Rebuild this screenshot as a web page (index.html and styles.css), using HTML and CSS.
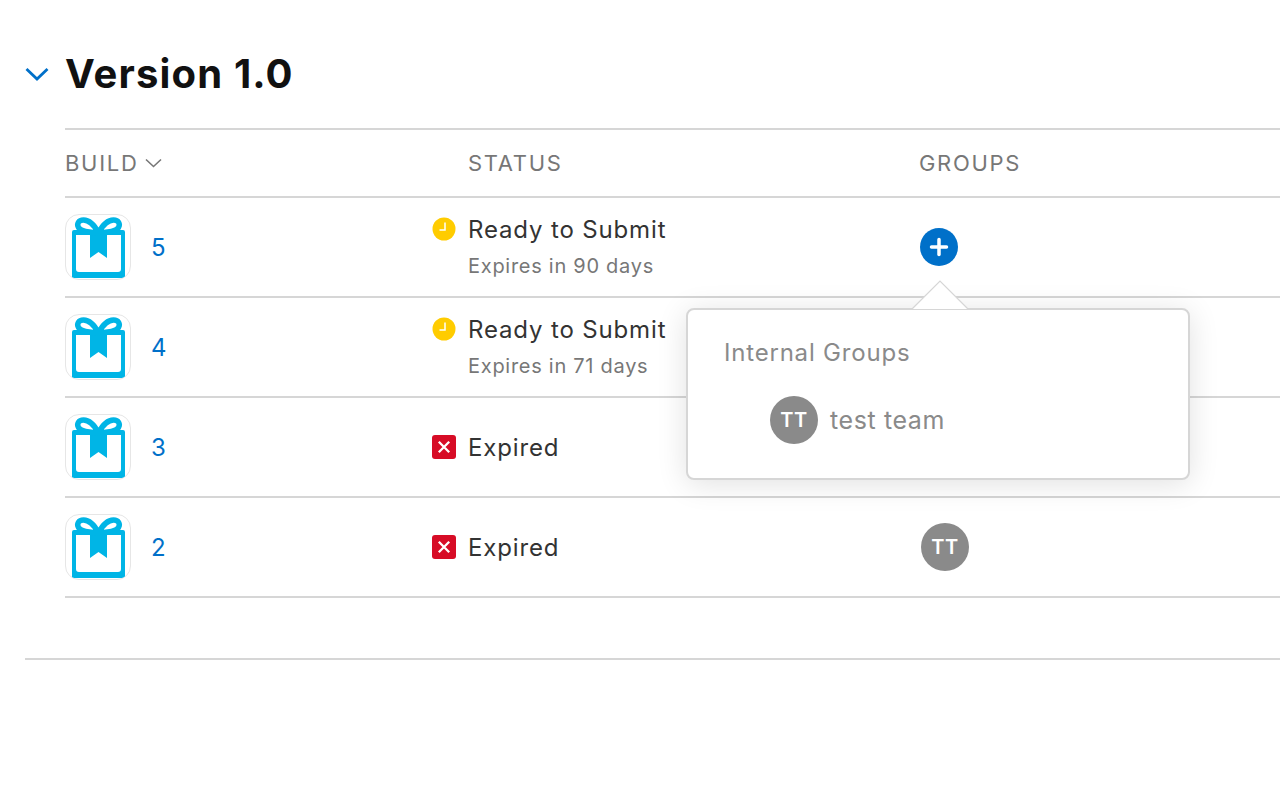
FILE: index.html
```html
<!DOCTYPE html>
<html lang="en">
<head>
<meta charset="utf-8">
<title>Version 1.0</title>
<link rel="stylesheet" href="styles.css">
</head>
<body>
<svg class="defs" width="0" height="0" aria-hidden="true">
  <symbol id="gift" viewBox="0 0 66 66">
    <path fill="#00b5e6" fill-rule="evenodd" d="M9 16h49a2 2 0 0 1 2 2v46H7V18a2 2 0 0 1 2-2zM11 21v34a3 3 0 0 0 3 3h39a3 3 0 0 0 3-3V21H42v23l-8.500-6-8.500 6V21z"/>
    <path fill="none" stroke="#00b5e6" stroke-width="5.500" d="M33.500 19C29 10 23 6 18.500 6 13.500 6 11.500 10 13.500 13.500 15 16.500 19 18 33.500 19zM33.500 19C38 10 44 6 48.500 6 53.500 6 55.500 10 53.500 13.500 52 16.500 48 18 33.500 19z"/>
  </symbol>
  <symbol id="clock" viewBox="0 0 24 24">
    <circle cx="12" cy="12" r="11.500" fill="#ffcc00"/>
    <path d="M13 5.500V13H7.500" fill="none" stroke="#fff" stroke-width="1.500"/>
  </symbol>
  <symbol id="cross" viewBox="0 0 24 24">
    <rect width="24" height="24" rx="3" fill="#d70c26"/>
    <path d="M6.800 6.800l10.400 10.400M17.200 6.800L6.800 17.200" fill="none" stroke="#fff" stroke-width="2.300"/>
  </symbol>
</svg>

<main class="page">
  <header class="version">
    <svg class="version-chevron" width="24" height="14" viewBox="0 0 24 14" aria-hidden="true"><path d="M1.500 2L12 12 22.500 2" fill="none" stroke="#0070c9" stroke-width="2.800"/></svg>
    <h1 class="version-title">Version 1.0</h1>
  </header>

  <div class="table">
    <div class="row row-head">
      <div class="col-build head-label">BUILD
        <svg class="sort" width="17" height="10" viewBox="0 0 17 10" aria-hidden="true"><path d="M1 1.500L8.500 8.500 16 1.500" fill="none" stroke="#777" stroke-width="1.600"/></svg>
      </div>
      <div class="head-label">STATUS</div>
      <div class="head-label">GROUPS</div>
    </div>

    <div class="row">
      <div class="col-build">
        <div class="app-icon"><svg width="66" height="66"><use href="#gift"/></svg></div>
        <a class="build-no">5</a>
      </div>
      <div class="col-status">
        <svg class="status-icon" width="24" height="24"><use href="#clock"/></svg>
        <div class="status-name">Ready to Submit</div>
        <div class="status-note">Expires in 90 days</div>
      </div>
      <div class="col-groups">
        <div class="add-btn">
          <svg width="38" height="38" viewBox="0 0 38 38" aria-hidden="true"><circle cx="19" cy="19" r="19" fill="#0070c9"/><path d="M19 11.500v15M11.500 19h15" stroke="#fff" stroke-width="3.500" stroke-linecap="round"/></svg>
        </div>
      </div>
    </div>

    <div class="row">
      <div class="col-build">
        <div class="app-icon"><svg width="66" height="66"><use href="#gift"/></svg></div>
        <a class="build-no">4</a>
      </div>
      <div class="col-status">
        <svg class="status-icon" width="24" height="24"><use href="#clock"/></svg>
        <div class="status-name">Ready to Submit</div>
        <div class="status-note">Expires in 71 days</div>
      </div>
      <div class="col-groups"></div>
    </div>

    <div class="row">
      <div class="col-build">
        <div class="app-icon"><svg width="66" height="66"><use href="#gift"/></svg></div>
        <a class="build-no">3</a>
      </div>
      <div class="col-status col-status-single">
        <svg class="status-icon status-icon-single" width="24" height="24"><use href="#cross"/></svg>
        <div class="status-name">Expired</div>
      </div>
      <div class="col-groups"></div>
    </div>

    <div class="row">
      <div class="col-build">
        <div class="app-icon"><svg width="66" height="66"><use href="#gift"/></svg></div>
        <a class="build-no">2</a>
      </div>
      <div class="col-status col-status-single">
        <svg class="status-icon status-icon-single" width="24" height="24"><use href="#cross"/></svg>
        <div class="status-name">Expired</div>
      </div>
      <div class="col-groups"><span class="avatar avatar-row">TT</span></div>
    </div>
  </div>

  <div class="section-end"></div>
</main>

<aside class="popover">
  <svg class="popover-arrow" width="60" height="30" viewBox="0 0 60 30" aria-hidden="true"><path d="M1 29L29 1l28 28" fill="#fff" stroke="#d6d6d6" stroke-width="1.200"/></svg>
  <div class="popover-title">Internal Groups</div>
  <div class="popover-item"><span class="avatar">TT</span><span class="popover-name">test team</span></div>
</aside>
</body>
</html>
```
FILE: styles.css
```css
* { box-sizing: border-box; }
html, body { margin: 0; height: 100%; overflow: hidden; }
body {
  background: #fff;
  color: #333;
  font-family: Inter, "Liberation Sans", sans-serif;
  -webkit-font-smoothing: antialiased;
}
.defs { position: absolute; }
.page { padding: 48px 0 0 25px; }

.version { display: flex; align-items: center; height: 52px; }
.version-chevron { flex: none; margin-right: 16px; }
.version-title {
  margin: 0;
  font-size: 40px;
  line-height: 52px;
  font-weight: 700;
  color: #111;
  letter-spacing: 1.15px;
}

.table { margin: 28px 0 0 40px; border-top: 2px solid #d6d6d6; }
.row {
  display: grid;
  grid-template-columns: 403px 451px 1fr;
  height: 100px;
  border-bottom: 2px solid #d6d6d6;
}
.row-head { height: 68px; align-items: center; }
.head-label { font-size: 22px; color: #777; letter-spacing: 1.7px; }
.sort { flex: none; }

.col-build { display: flex; align-items: center; gap: 20px; }
.row-head .col-build { gap: 6px; }
.app-icon {
  width: 66px;
  height: 66px;
  border: 1px solid #e6e6e6;
  border-radius: 14px;
  overflow: hidden;
  flex: none;
}
.app-icon svg { display: block; margin: -1px; }
.build-no { font-size: 24px; color: #0070c9; }

.col-status { position: relative; padding-top: 15px; }
.col-status-single { padding-top: 32px; }
.status-icon { position: absolute; left: -36px; top: 19px; display: block; }
.status-icon-single { top: 37px; }
.status-name { font-size: 24px; line-height: 34px; color: #333; letter-spacing: 0.85px; }
.col-status-single .status-name { margin-top: 1px; }
.status-note { font-size: 20px; line-height: 28px; margin-top: 5px; color: #777; letter-spacing: 0.72px; }

.col-groups { display: flex; align-items: center; }
.add-btn { margin: 0 0 0 1px; }
.add-btn svg { display: block; }

.avatar {
  display: flex;
  align-items: center;
  justify-content: center;
  width: 48px;
  height: 48px;
  border-radius: 50%;
  background: #8a8a8a;
  color: #fff;
  font-size: 20px;
  font-weight: 600;
  letter-spacing: 0.5px;
  flex: none;
}
.avatar-row { margin-left: 2px; }

.section-end { height: 2px; margin-top: 60px; background: #d6d6d6; }

.popover {
  position: absolute;
  left: 686px;
  top: 308px;
  width: 504px;
  height: 172px;
  background: #fff;
  border: 2px solid #d6d6d6;
  border-radius: 8px;
  padding: 26px 36px;
  box-shadow: 0 4px 30px rgba(0, 0, 0, 0.12);
}
.popover-arrow { position: absolute; left: 223px; top: -30px; display: block; }
.popover-title { font-size: 24px; line-height: 34px; color: #8a8a8a; letter-spacing: 0.8px; }
.popover-item { display: flex; align-items: center; gap: 12px; margin: 26px 0 0 46px; }
.popover-name { font-size: 25px; color: #8a8a8a; letter-spacing: 0.6px; }
```
